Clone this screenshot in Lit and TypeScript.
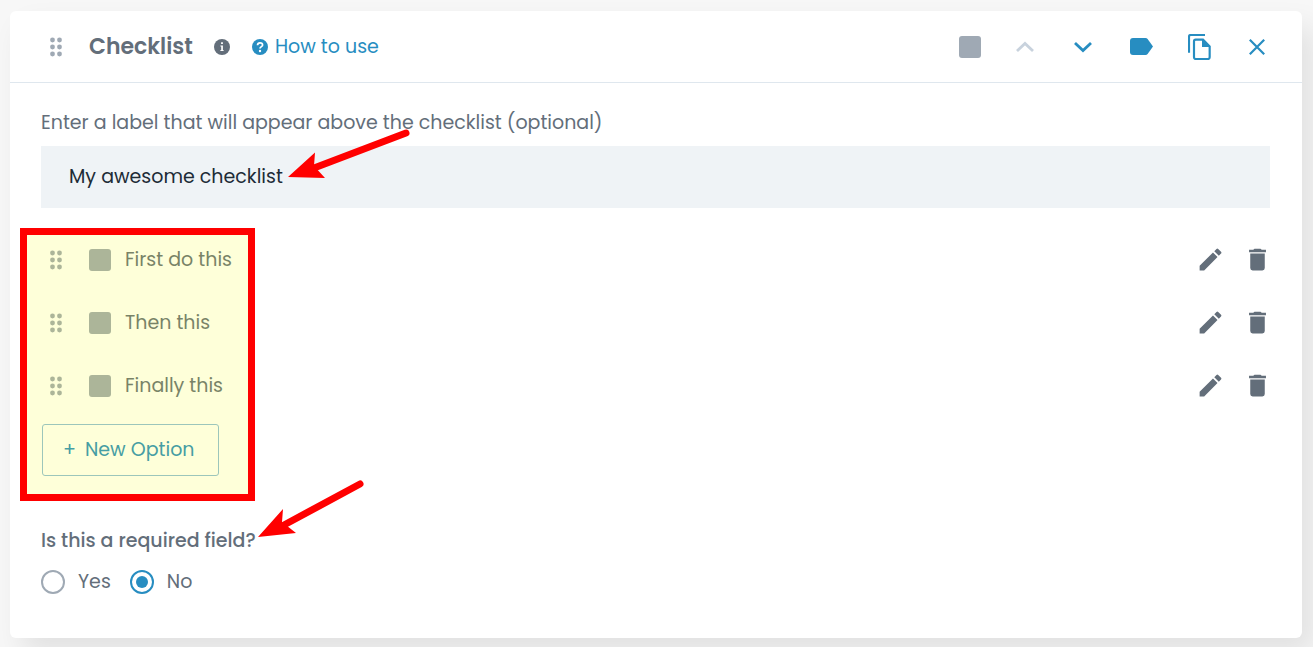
import { LitElement, html, css, svg } from "lit";
import { customElement, state } from "lit/decorators.js";

const dragIcon = html`
  <svg class="drag" viewBox="0 0 12 20" width="12" height="20" aria-hidden="true">
    ${[3, 10, 17].map(
      (y) => svg`<circle cx="2.5" cy=${y} r="2.4" /><circle cx="9.5" cy=${y} r="2.4" />`
    )}
  </svg>
`;

const pencilIcon = html`
  <svg viewBox="0 0 24 24" width="29" height="29" aria-hidden="true">
    <path d="M3 17.25V21h3.75L17.81 9.94l-3.75-3.75L3 17.25zM20.71 7.04a1 1 0 0 0 0-1.41l-2.34-2.34a1 1 0 0 0-1.41 0l-1.83 1.83 3.75 3.75 1.83-1.83z" />
  </svg>
`;

const trashIcon = html`
  <svg viewBox="0 0 24 24" width="29" height="29" aria-hidden="true">
    <path d="M6 19a2 2 0 0 0 2 2h8a2 2 0 0 0 2-2V7H6v12zM19 4h-3.5l-1-1h-5l-1 1H5v2h14V4z" />
  </svg>
`;

const chevron = (d: string) => html`
  <svg viewBox="0 0 20 12" width="20" height="12" fill="none" stroke="currentColor" stroke-width="2.8" aria-hidden="true">
    <path d=${d} />
  </svg>
`;

@customElement("app-root")
export class AppRoot extends LitElement {
  @state() private options = ["First do this", "Then this", "Finally this"];
  @state() private required = false;

  static styles = css`
    :host {
      display: block;
      box-sizing: border-box;
      min-height: 100vh;
      padding: 11px 11px 9px 10px;
      overflow: hidden;
      background: #f7f7f7;
      color: #636e7a;
      font-family: Poppins, Inter, sans-serif;
      font-size: 19px;
      font-weight: 400;
      line-height: 28px;
    }
    * {
      box-sizing: border-box;
    }
    svg {
      display: block;
      flex: none;
    }
    button {
      display: flex;
      align-items: center;
      justify-content: center;
      margin: 0;
      padding: 0;
      border: 0;
      background: none;
      color: inherit;
      font: inherit;
      cursor: pointer;
    }
    .card {
      position: relative;
      background: #fff;
      border-radius: 6px;
      box-shadow: 12px 16px 30px rgba(0, 0, 0, 0.09);
    }
    .header {
      display: flex;
      align-items: center;
      height: 72px;
      padding: 0 16px 0 40px;
      border-bottom: 1px solid #dfe7ee;
      fill: currentColor;
    }
    .drag {
      fill: #9fa9b4;
    }
    .title {
      margin: 0 21px 0 27px;
      font-size: 22px;
      font-weight: 600;
    }
    .help {
      display: flex;
      align-items: center;
      gap: 7px;
      margin-left: 22px;
      color: #278dc1;
      text-decoration: none;
    }
    .tools {
      display: flex;
      align-items: center;
      margin-left: auto;
      color: #278dc1;
    }
    .tools button {
      width: 58px;
      height: 48px;
    }
    .tools .first {
      width: 52px;
    }
    .tools .faded {
      color: #c8d2dd;
    }
    .box {
      flex: none;
      width: 22px;
      height: 22px;
      margin: 0;
      border-radius: 3px;
      background: #9fa9b4;
      appearance: none;
    }
    .body {
      padding: 26px 32px 42px 31px;
    }
    .field-label {
      display: block;
    }
    .field {
      display: block;
      width: 100%;
      height: 62px;
      margin: 9px 0 20px;
      padding: 0 28px 1px;
      border: 0;
      border-radius: 0;
      background: #eff3f6;
      color: #202b36;
      font: inherit;
      outline: none;
    }
    .options {
      position: relative;
      padding-bottom: 51px;
    }
    .list {
      margin: 0 0 7px;
      padding: 0;
      list-style: none;
    }
    .option {
      display: flex;
      align-items: center;
      height: 63px;
      padding-left: 9px;
    }
    .option label {
      display: flex;
      align-items: center;
      gap: 14px;
      margin-left: 27px;
    }
    .actions {
      display: flex;
      gap: 18px;
      margin: 0 -2px 0 auto;
      fill: currentColor;
    }
    .new-option {
      gap: 9px;
      height: 52px;
      margin-left: 1px;
      padding: 0 24px 0 20px;
      border: 1px solid #8cbcdc;
      border-radius: 3px;
      color: #278dc1;
    }
    .highlight {
      position: absolute;
      top: 0;
      bottom: 26px;
      left: -21px;
      width: 235px;
      border: 7px solid #f00;
      background: rgba(245, 255, 0, 0.15);
      pointer-events: none;
    }
    .choice {
      margin: 0;
      padding: 0;
      border: 0;
    }
    .choice legend {
      padding: 0;
      font-weight: 500;
    }
    .radios {
      display: flex;
      gap: 19px;
      padding-top: 13px;
    }
    .radios label {
      display: flex;
      align-items: center;
      gap: 13px;
    }
    .radios input {
      display: grid;
      place-items: center;
      width: 24px;
      height: 24px;
      margin: 0;
      border: 2px solid #9fa9b4;
      border-radius: 50%;
      appearance: none;
    }
    .radios input:checked {
      border-color: #278dc1;
    }
    .radios input:checked::before {
      content: "";
      width: 12px;
      height: 12px;
      border-radius: 50%;
      background: #278dc1;
    }
    .arrow {
      position: absolute;
      fill: #f00;
      pointer-events: none;
    }
    .arrow line {
      stroke: #f00;
      stroke-width: 7;
      stroke-linecap: round;
    }
    .arrow-label {
      top: 117px;
      left: 278px;
    }
    .arrow-required {
      top: 467px;
      left: 248px;
    }
  `;

  private removeOption(index: number) {
    this.options = this.options.filter((_, i) => i !== index);
  }

  private addOption() {
    this.options = [...this.options, "New option"];
  }

  render() {
    return html`
      <main class="card">
        <header class="header">
          ${dragIcon}
          <h1 class="title">Checklist</h1>
          <svg viewBox="0 0 16 16" width="16" height="16" role="img" aria-label="Info">
            <circle cx="8" cy="8" r="8" />
            <path fill="#fff" d="M7.1 3.2h1.800v1.700H7.100zM6.400 6.400h2.500v4.500h.7v1.100H6.400v-1.100h.8V7.500h-.8z" />
          </svg>
          <a class="help" href="#help">
            <svg viewBox="0 0 16 16" width="16" height="16" aria-hidden="true">
              <circle cx="8" cy="8" r="8" fill="currentColor" />
              <path d="M5.500 6.300C5.600 4.600 6.600 3.900 8 3.900s2.600.8 2.600 2.100C10.600 7.700 8 7.600 8 9.600" fill="none" stroke="#fff" stroke-width="1.700" />
              <circle cx="8" cy="12" r="1.200" fill="#fff" />
            </svg>
            How to use
          </a>
          <div class="tools">
            <button class="first" aria-label="Checklist type"><span class="box"></span></button>
            <button class="faded" aria-label="Move up">${chevron("M2 10 10 2.500 18 10")}</button>
            <button aria-label="Move down">${chevron("M2 2 10 9.500 18 2")}</button>
            <button aria-label="Tag">
              <svg viewBox="0 0 23 17" width="23" height="17" fill="currentColor" aria-hidden="true">
                <path d="M3 0h12.500q1.300 0 2.100 1L23 8.500 17.600 16q-.8 1-2.100 1H3q-3 0-3-3V3q0-3 3-3z" />
              </svg>
            </button>
            <button aria-label="Duplicate">
              <svg viewBox="771 102 69 78" width="23" height="26" aria-hidden="true">
                <path d="M774 158V110q0-5 5-5h43M794 119h22l20 20v33q0 5-5 5h-37q-5 0-5-5v-48q0-5 5-5z" fill="none" stroke="currentColor" stroke-width="6.500" />
                <path d="M813 117v24h25z" fill="currentColor" />
              </svg>
            </button>
            <button aria-label="Close">
              <svg viewBox="0 0 16 16" width="16" height="16" stroke="currentColor" stroke-width="2.200" aria-hidden="true">
                <path d="M.8.800 15.200 15.200M15.200.800.800 15.200" />
              </svg>
            </button>
          </div>
        </header>

        <div class="body">
          <label class="field-label" for="label">Enter a label that will appear above the checklist (optional)</label>
          <input class="field" id="label" type="text" value="My awesome checklist" />

          <section class="options">
            <ul class="list">
              ${this.options.map(
                (text, i) => html`
                  <li class="option">
                    ${dragIcon}
                    <label><input class="box" type="checkbox" disabled />${text}</label>
                    <div class="actions">
                      <button aria-label="Edit ${text}">${pencilIcon}</button>
                      <button aria-label="Delete ${text}" @click=${() => this.removeOption(i)}>${trashIcon}</button>
                    </div>
                  </li>
                `
              )}
            </ul>
            <button class="new-option" @click=${this.addOption}><span>+</span>New Option</button>
            <div class="highlight"></div>
          </section>

          <fieldset class="choice">
            <legend>Is this a required field?</legend>
            <div class="radios">
              <label><input type="radio" name="required" .checked=${this.required} @change=${() => (this.required = true)} />Yes</label>
              <label><input type="radio" name="required" .checked=${!this.required} @change=${() => (this.required = false)} />No</label>
            </div>
          </fieldset>
        </div>

        <svg class="arrow arrow-label" viewBox="0 0 126 54" width="126" height="54" aria-hidden="true">
          <line x1="118" y1="5" x2="26" y2="40" />
          <path d="M0 49 27 24.500 26 38 37 50z" />
        </svg>
        <svg class="arrow arrow-required" viewBox="0 0 108 60" width="108" height="60" aria-hidden="true">
          <line x1="102" y1="6" x2="26" y2="47" />
          <path d="M0 59 25 31 24 44 38 55z" />
        </svg>
      </main>
    `;
  }
}
